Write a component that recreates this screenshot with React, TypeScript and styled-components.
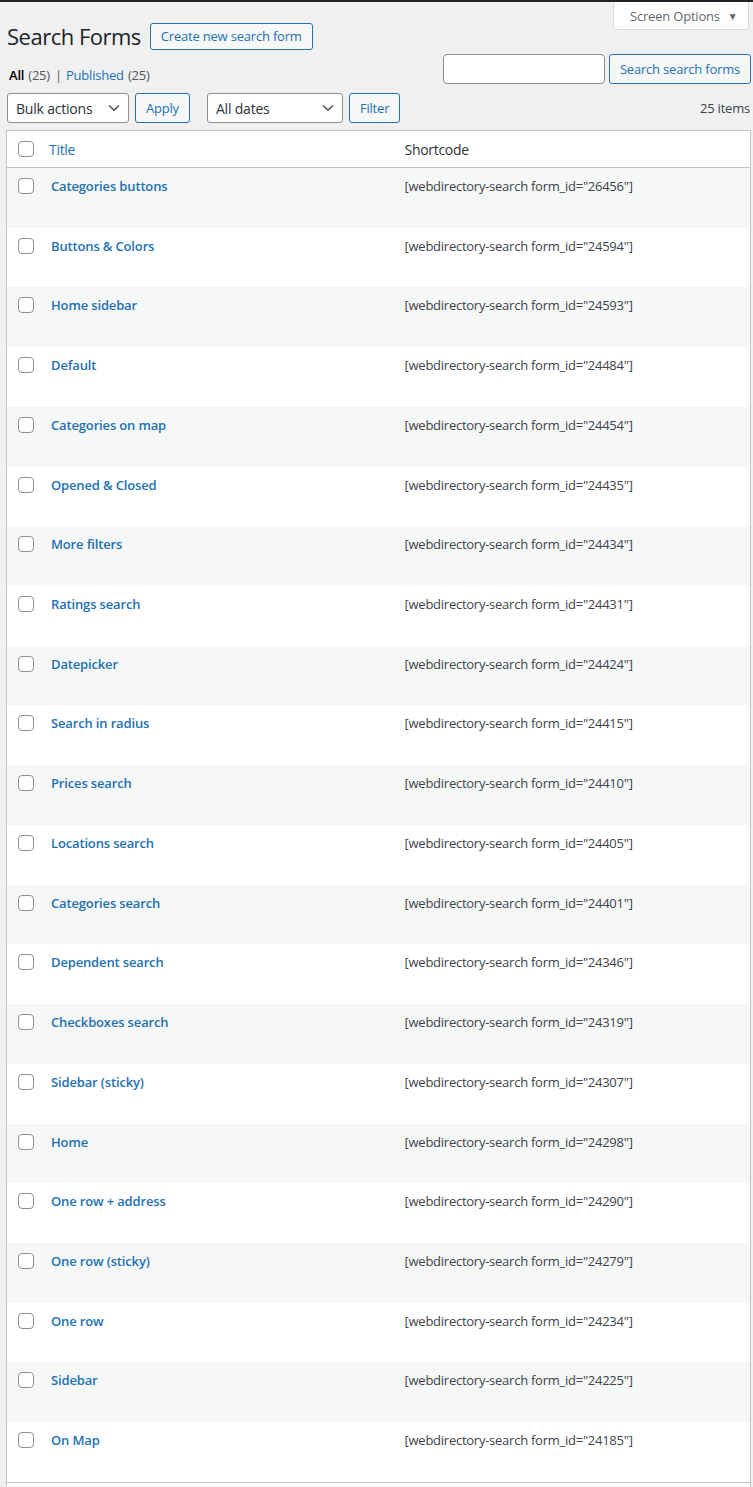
import React from "react";
import styled, { createGlobalStyle } from "styled-components";

const GlobalStyle = createGlobalStyle`
  html, body {
    margin: 0;
    padding: 0;
    overflow: hidden;
    background: #f0f0f1;
  }
  body {
    font-family: "Open Sans", "Noto Sans", sans-serif;
    font-size: 13px;
    color: #3c434a;
  }
  * { box-sizing: border-box; }
`;

const Page = styled.div`
  position: relative;
  min-height: 1487px;
`;

const AdminBarEdge = styled.div`
  height: 2px;
  background: #1d2327;
`;

const ScreenOptions = styled.div`
  position: absolute;
  top: 2px;
  right: 4px;
  width: 136px;
  height: 28px;
  background: #fff;
  border: 1px solid #dcdcde;
  border-top: none;
  border-radius: 0 0 4px 4px;
  display: flex;
  align-items: center;
  padding-left: 16px;
  gap: 8px;
  color: #646970;
  font-size: 13px;
  letter-spacing: -0.2px;
`;

const Caret = styled.span`
  font-size: 10px;
  color: #646970;
`;

const Wrap = styled.div`
  padding: 0 2px 0 6px;
`;

const TitleRow = styled.div`
  display: flex;
  align-items: center;
  gap: 9px;
  padding-top: 19px;
  height: 49px;
`;

const H1 = styled.h1`
  margin: 0;
  font-size: 22px;
  font-weight: 400;
  line-height: 30px;
  color: #1d2327;
  padding-left: 1px;
  letter-spacing: -0.5px;
`;

const OutlineButton = styled.button<{ $h?: number }>`
  font-family: inherit;
  font-size: 13px;
  letter-spacing: -0.2px;
  color: #2271b1;
  background: #f6f7f7;
  border: 1px solid #2271b1;
  border-radius: 3px;
  height: ${(p) => p.$h ?? 30}px;
  padding: 0 10px;
  display: inline-flex;
  align-items: center;
  justify-content: center;
  white-space: nowrap;
  cursor: pointer;
`;

const FilterRow = styled.div`
  display: flex;
  justify-content: space-between;
  align-items: flex-start;
  margin-top: 3px;
  height: 30px;
`;

const SubSub = styled.div`
  margin-top: 11px;
  padding-left: 3px;
  line-height: 20px;
  font-size: 13px;
  color: #50575e;
  display: flex;
  gap: 4px;
  letter-spacing: -0.2px;
`;

const Current = styled.span`
  color: #000;
  font-weight: 600;
`;

const Link = styled.span`
  color: #2271b1;
`;

const Sep = styled.span`
  color: #50575e;
  padding: 0 1px 0 1px;
  margin-right: -1px;
`;

const SearchBox = styled.div`
  display: flex;
  gap: 4px;
`;

const Input = styled.div`
  width: 162px;
  height: 30px;
  background: #fff;
  border: 1px solid #8c8f94;
  border-radius: 4px;
`;

const TableNav = styled.div`
  display: flex;
  align-items: center;
  margin-top: 9px;
  height: 30px;
  padding-left: 1px;
`;

const Group = styled.div`
  display: flex;
  gap: 6px;
  margin-right: 17px;
`;

const Select = styled.div<{ $w: number }>`
  width: ${(p) => p.$w}px;
  height: 30px;
  background: #fff;
  border: 1px solid #8c8f94;
  border-radius: 3px;
  display: flex;
  align-items: center;
  justify-content: space-between;
  padding: 0 8px 0 8px;
  font-size: 14px;
  color: #2c3338;
  letter-spacing: -0.2px;
`;

const Count = styled.div`
  margin-left: auto;
  color: #3c434a;
  font-size: 13px;
  padding-right: 1px;
  letter-spacing: -0.2px;
`;

const Table = styled.div`
  margin-top: 7px;
  background: #fff;
  border: 1px solid #c3c4c7;
  border-bottom: none;
`;

const HeadRow = styled.div`
  display: grid;
  grid-template-columns: 32px 1fr 1fr;
  height: 37px;
  align-items: center;
  border-bottom: 1px solid #c3c4c7;
`;

const FootEdge = styled.div`
  height: 40px;
  border-top: 1px solid #c3c4c7;
`;

const Row = styled.div<{ $striped: boolean }>`
  display: grid;
  grid-template-columns: 32px 1fr 1fr;
  height: 59.73px;
  align-items: start;
  background: ${(p) => (p.$striped ? "#f6f7f7" : "#fff")};
`;

const CheckCell = styled.div<{ $top?: number }>`
  padding-left: 11px;
  padding-top: ${(p) => p.$top ?? 0}px;
  display: flex;
`;

const Checkbox = styled.span`
  width: 16px;
  height: 16px;
  border: 1px solid #8c8f94;
  border-radius: 4px;
  background: #fff;
  display: block;
`;

const HeadCell = styled.div<{ $link?: boolean }>`
  padding-left: 10px;
  font-size: 14px;
  color: ${(p) => (p.$link ? "#2271b1" : "#2c3338")};
  letter-spacing: -0.3px;
`;

const TitleCell = styled.div`
  padding: 9px 10px 0 12px;
  line-height: 19.5px;
  font-size: 13px;
  font-weight: 600;
  color: #2271b1;
  letter-spacing: -0.15px;
`;

const CodeCell = styled.div`
  padding: 9px 10px 0 10px;
  line-height: 19.5px;
  font-size: 13px;
  color: #3c434a;
  letter-spacing: -0.25px;
`;

const Chevron = () => (
  <svg width="12" height="8" viewBox="0 0 12 8" aria-hidden="true">
    <path d="M1 1.5 L6 6.2 L11 1.5" fill="none" stroke="#50575e" strokeWidth="1.6" />
  </svg>
);

const rows: [string, string][] = [
  ["Categories buttons", "26456"],
  ["Buttons & Colors", "24594"],
  ["Home sidebar", "24593"],
  ["Default", "24484"],
  ["Categories on map", "24454"],
  ["Opened & Closed", "24435"],
  ["More filters", "24434"],
  ["Ratings search", "24431"],
  ["Datepicker", "24424"],
  ["Search in radius", "24415"],
  ["Prices search", "24410"],
  ["Locations search", "24405"],
  ["Categories search", "24401"],
  ["Dependent search", "24346"],
  ["Checkboxes search", "24319"],
  ["Sidebar (sticky)", "24307"],
  ["Home", "24298"],
  ["One row + address", "24290"],
  ["One row (sticky)", "24279"],
  ["One row", "24234"],
  ["Sidebar", "24225"],
  ["On Map", "24185"],
];

export default function App() {
  return (
    <Page>
      <GlobalStyle />
      <AdminBarEdge />
      <ScreenOptions>
        Screen Options <Caret>▼</Caret>
      </ScreenOptions>
      <Wrap>
        <TitleRow>
          <H1>Search Forms</H1>
          <OutlineButton $h={27}>Create new search form</OutlineButton>
        </TitleRow>
        <FilterRow>
          <SubSub>
            <Current>All</Current>
            <span>(25)</span>
            <Sep>|</Sep>
            <Link>Published</Link>
            <span>(25)</span>
          </SubSub>
          <SearchBox>
            <Input />
            <OutlineButton>Search search forms</OutlineButton>
          </SearchBox>
        </FilterRow>
        <TableNav>
          <Group>
            <Select $w={122}>
              Bulk actions <Chevron />
            </Select>
            <OutlineButton>Apply</OutlineButton>
          </Group>
          <Group>
            <Select $w={136}>
              All dates <Chevron />
            </Select>
            <OutlineButton>Filter</OutlineButton>
          </Group>
          <Count>25 items</Count>
        </TableNav>
        <Table>
          <HeadRow>
            <CheckCell>
              <Checkbox />
            </CheckCell>
            <HeadCell $link>Title</HeadCell>
            <HeadCell>Shortcode</HeadCell>
          </HeadRow>
          {rows.map(([title, id], i) => (
            <Row key={id} $striped={i % 2 === 0}>
              <CheckCell $top={10}>
                <Checkbox />
              </CheckCell>
              <TitleCell>{title}</TitleCell>
              <CodeCell>[webdirectory-search form_id="{id}"]</CodeCell>
            </Row>
          ))}
          <FootEdge />
        </Table>
      </Wrap>
    </Page>
  );
}
